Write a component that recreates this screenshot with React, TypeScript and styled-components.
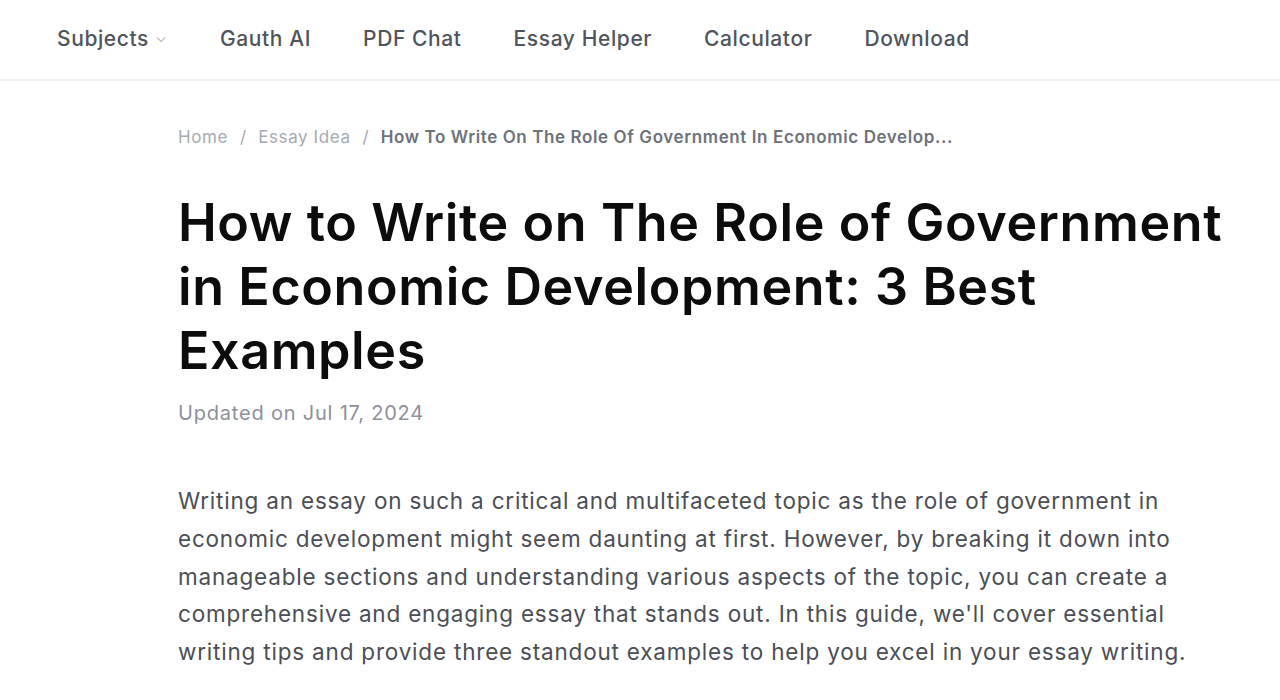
import React from "react";
import styled, { createGlobalStyle } from "styled-components";

const GlobalStyle = createGlobalStyle`
    body {
        margin: 0;
        background: #ffffff;
        font-family: Inter, "Noto Sans", sans-serif;
    }
`;

const Header = styled.header`
    height: 81px;
    border-bottom: 2px solid #eceef2;
    display: flex;
    align-items: center;
    padding: 0 0 2px 57px;
    box-sizing: border-box;
`;

const Nav = styled.nav`
    display: flex;
    align-items: center;
    gap: 52px;
`;

const NavItem = styled.a`
    display: flex;
    align-items: center;
    gap: 5px;
    font-size: 21px;
    font-weight: 500;
    color: #50545c;
    text-decoration: none;
    letter-spacing: 0.6px;
`;

const Main = styled.main`
    padding: 46px 0 0 178px;
`;

const Crumbs = styled.div`
    display: flex;
    align-items: center;
    gap: 12px;
    font-size: 17px;
    color: #a6aab2;
`;

const Crumb = styled.span<{ $current?: boolean }>`
    color: ${(p) => (p.$current ? "#6d727b" : "#a6aab2")};
    font-weight: ${(p) => (p.$current ? 600 : 400)};
    letter-spacing: 0.6px;
`;

const Title = styled.h1`
    margin: 44px 0 0;
    font-size: 52px;
    line-height: 64px;
    font-weight: 600;
    color: #0c0c0c;
    letter-spacing: 0.6px;
    white-space: nowrap;
`;

const Updated = styled.div`
    margin-top: 18px;
    font-size: 20px;
    color: #8d919a;
    letter-spacing: 0.8px;
`;

const Intro = styled.p`
    margin: 57px 0 0;
    font-size: 22.5px;
    line-height: 37.75px;
    color: #4b4e55;
    letter-spacing: 0.8px;
    white-space: nowrap;
`;

function Chevron() {
    return (
        <svg width="14" height="14" viewBox="0 0 14 14" fill="none">
            <path d="M3 5.5 L7 9.5 L11 5.5" stroke="#b8bcc4" strokeWidth="1.2" />
        </svg>
    );
}

export default function App() {
    return (
        <>
            <GlobalStyle />
            <Header>
                <Nav>
                    <NavItem>Subjects <Chevron /></NavItem>
                    <NavItem>Gauth AI</NavItem>
                    <NavItem>PDF Chat</NavItem>
                    <NavItem>Essay Helper</NavItem>
                    <NavItem>Calculator</NavItem>
                    <NavItem>Download</NavItem>
                </Nav>
            </Header>
            <Main>
                <Crumbs>
                    <Crumb>Home</Crumb>
                    <span>/</span>
                    <Crumb>Essay Idea</Crumb>
                    <span>/</span>
                    <Crumb $current>How To Write On The Role Of Government In Economic Develop...</Crumb>
                </Crumbs>
                <Title>
                    How to Write on The Role of Government
                    <br />
                    in Economic Development: 3 Best
                    <br />
                    Examples
                </Title>
                <Updated>Updated on Jul 17, 2024</Updated>
                <Intro>
                    Writing an essay on such a critical and multifaceted topic as the role of government in
                    <br />
                    economic development might seem daunting at first. However, by breaking it down into
                    <br />
                    manageable sections and understanding various aspects of the topic, you can create a
                    <br />
                    comprehensive and engaging essay that stands out. In this guide, we'll cover essential
                    <br />
                    writing tips and provide three standout examples to help you excel in your essay writing.
                </Intro>
            </Main>
        </>
    );
}
